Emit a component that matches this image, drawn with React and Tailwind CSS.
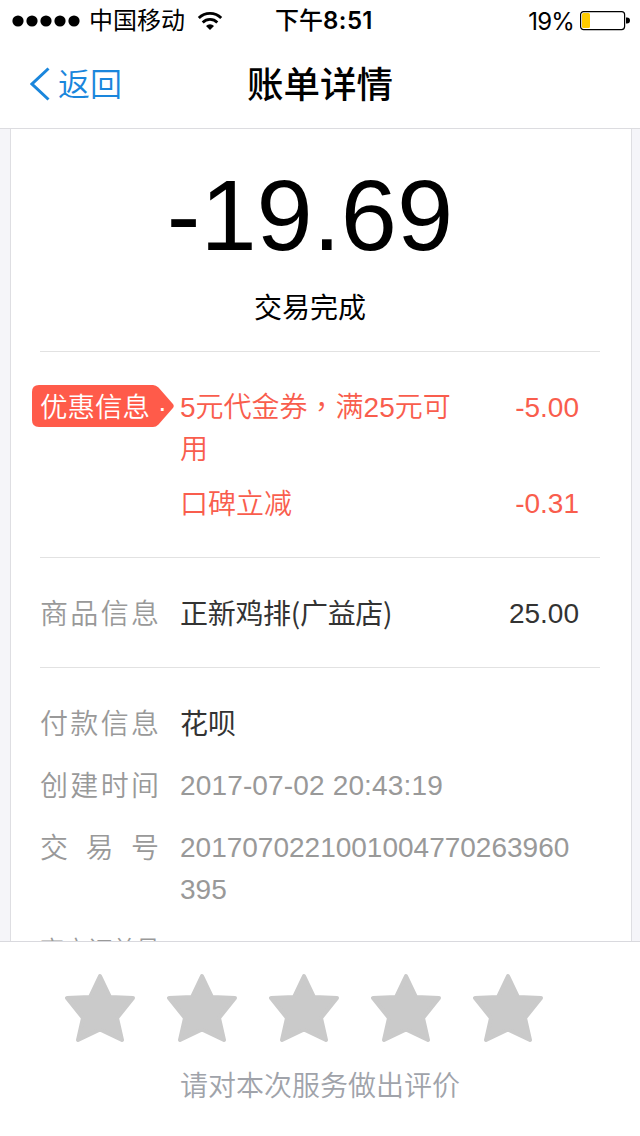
const LATIN_CJK = "font-['Liberation_Sans','Noto_Sans_CJK_SC',sans-serif]";

function Wifi() {
  return (
    <svg width="26" height="20" viewBox="0 0 26 20" fill="none" stroke="#000" strokeWidth="2.800">
      <path d="M1.8 7.100a15.800 15.800 0 0 1 22.400 0" />
      <path d="M5.700 11.400a10.400 10.400 0 0 1 14.600 0" />
      <path d="M9 15a5.600 5.600 0 0 1 8 0l-4 4z" fill="#000" stroke="none" />
    </svg>
  );
}

function Battery() {
  return (
    <svg width="50" height="20" viewBox="0 0 50 20">
      <rect x="0.6" y="0.6" width="44" height="18" rx="3" fill="#fff" stroke="#000" strokeWidth="1.2" />
      <rect x="2" y="2" width="8" height="15" rx="1.5" fill="#fc0" />
      <path d="M46 6.500h1a3 3 0 0 1 0 6h-1z" />
    </svg>
  );
}

function StatusBar() {
  return (
    <div className="grid h-[42px] grid-cols-[1fr_auto_1fr] items-center pr-2.5 pl-3 text-2xl text-black">
      <div className="flex items-center">
        <svg className="shrink-0" width="70" height="14" viewBox="0 0 70 14">
          {[6, 20, 34, 48, 62].map((cx) => (
            <circle key={cx} cx={cx} cy="7" r="5.6" />
          ))}
        </svg>
        <span className="ml-[7px] whitespace-nowrap">中国移动</span>
        <span className="ml-3 shrink-0">
          <Wifi />
        </span>
      </div>
      <div className="pl-1.5 font-['Inter','Noto_Sans_CJK_SC',sans-serif] font-medium whitespace-nowrap">
        下午<span className="font-semibold tracking-[0.4px]">8:51</span>
      </div>
      <div className="flex items-center justify-end gap-1.5">
        <span className="pt-px font-['Inter',sans-serif] tracking-[-0.8px]">19%</span>
        <Battery />
      </div>
    </div>
  );
}

function NavBar() {
  return (
    <div className="grid h-[86px] grid-cols-[1fr_auto_1fr] items-center px-[30px] pb-0.5">
      <button className="flex items-center gap-2 text-[32px] leading-none font-[350] text-[#1a86dc]">
        <svg width="20" height="34" viewBox="0 0 20 34" fill="none" stroke="currentColor" strokeWidth="3">
          <path d="M18.500 1.500L2 17L18.500 32.500" />
        </svg>
        <span className="pt-0.5">返回</span>
      </button>
      <h1 className="pt-1 text-[36.500px] leading-none font-medium text-black">账单详情</h1>
    </div>
  );
}

function Row({ label, children, amount, small }) {
  return (
    <div className="flex leading-[42px]">
      <div
        className={`w-[119px] shrink-0 font-[350] whitespace-nowrap text-[#999] [text-align-last:justify] ${
          small ? "text-2xl leading-[38px]" : "-mb-px pt-px"
        }`}
      >
        {label}
      </div>
      <div className="ml-[21px] flex-1 break-all">{children}</div>
      {amount && <div className="w-[116px] shrink-0 pr-px text-right">{amount}</div>}
    </div>
  );
}

function DiscountTag() {
  return (
    <div className="relative -mt-0.5 -ml-2 h-[42px] w-[142px] shrink-0">
      <svg className="absolute inset-0" width="142" height="42" viewBox="0 0 142 42">
        <path
          fill="#ff5b4a"
          d="M7 0H121Q124 0 126.500 2.500L140.500 18.500Q143 21 140.500 23.500L126.500 39.500Q124 42 121 42H7Q0 42 0 35V7Q0 0 7 0Z"
        />
      </svg>
      <div className="relative pt-0.5 pl-2 text-[27.500px] leading-[42px] whitespace-pre text-white">优惠信息 ·</div>
    </div>
  );
}

function Discounts() {
  return (
    <section className="flex border-t border-[#e2e2e2] pt-[35px] pr-5 pb-8 font-[350] text-[#f95d4d]">
      <DiscountTag />
      <div className="ml-1.5 flex flex-1 flex-col gap-3 leading-[42px]">
        <div className="flex h-[84px] justify-between">
          <span className="w-[284px]">
            5元代金券<span className="font-['Noto_Sans_CJK_TC',sans-serif] leading-none">，</span>满25元可用
          </span>
          <span className="pr-px">-5.00</span>
        </div>
        <div className="flex h-[42px] justify-between">
          <span className="pt-px">口碑立减</span>
          <span className="pr-px">-0.31</span>
        </div>
      </div>
    </section>
  );
}

function Star() {
  return (
    <svg width="70" height="70" viewBox="0 0 70 70" fill="#cacaca" stroke="#cacaca" strokeWidth="4" strokeLinejoin="round">
      <path d="M35 3L45 24L68 25L52 45L57 67L35 56.500L13 67L18 45L2 25L25 24Z" />
    </svg>
  );
}

function RatingBar() {
  return (
    <footer className="flex h-[195px] shrink-0 flex-col border-t border-[#d9d9de] bg-white">
      <div className="flex gap-8 pt-[31px] pl-[65px]">
        {[1, 2, 3, 4, 5].map((n) => (
          <button key={n}>
            <Star />
          </button>
        ))}
      </div>
      <p className="mt-[23px] text-center text-[28px] leading-[42px] font-[350] text-[#a0a3aa]">请对本次服务做出评价</p>
    </footer>
  );
}

export default function App() {
  return (
    <div className={`flex h-[1136px] w-[640px] flex-col overflow-hidden bg-[#f5f5f9] ${LATIN_CJK}`}>
      <header className="h-[129px] shrink-0 border-b border-[#dcdce0] bg-white">
        <StatusBar />
        <NavBar />
      </header>

      <main className="mr-2 ml-2.5 min-h-0 flex-1 overflow-hidden border-x border-[#dedee2] bg-white pr-[31px] pl-[29px] text-[28px]">
        <div className="flex h-[222px] flex-col items-center pr-5 text-black">
          <div className="mt-[36px] text-[101px] leading-[100px]">-19.69</div>
          <div className="mt-[23px] leading-[42px]">交易完成</div>
        </div>

        <Discounts />

        <section className="border-t border-[#e2e2e2] pt-[35px] pr-5 pb-8 text-[#333]">
          <Row label="商品信息" amount="25.00">
            <div className="-mt-0.5 font-['Noto_Sans_CJK_SC',sans-serif] tracking-[-0.3px]">正新鸡排(广益店)</div>
          </Row>
        </section>

        <section className="flex flex-col gap-5 border-t border-[#e2e2e2] pt-[35px] pr-5 text-[#999]">
          <Row label="付款信息">
            <div className="-mb-px pt-px text-[#333]">花呗</div>
          </Row>
          <Row label="创建时间">
            <span className="tracking-[0.15px]">2017-07-02 20:43:19</span>
          </Row>
          <Row label="交易号">2017070221001004770263960395</Row>
          <Row label="商户订单号" small />
        </section>
      </main>

      <RatingBar />
    </div>
  );
}
